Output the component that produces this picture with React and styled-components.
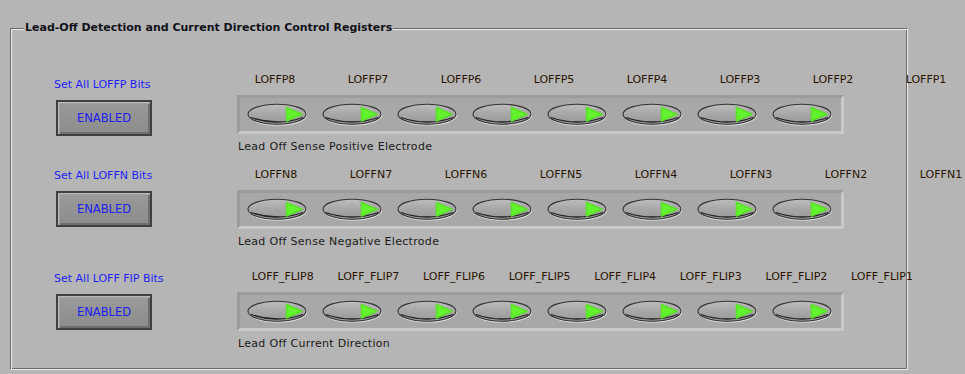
import React from "react";
import styled, { createGlobalStyle } from "styled-components";

const BG = "#b5b5b5";

const Global = createGlobalStyle`
  html, body {
    margin: 0;
    padding: 0;
    background: ${BG};
    width: 965px;
    height: 374px;
    overflow: hidden;
  }
  #root {
    font-family: "DejaVu Sans", "Liberation Sans", sans-serif;
  }
`;

const Page = styled.div`
  width: 965px;
  height: 374px;
  padding: 28px 0 0 10px;
  box-sizing: border-box;
`;

const Frame = styled.div`
  width: 898px;
  height: 342px;
  box-sizing: border-box;
  border: 1px solid;
  border-color: #6a6a6a #ececec #ececec #6a6a6a;
  box-shadow: inset 1px 1px 0 #ececec, inset -1px -1px 0 #6a6a6a;
  display: flex;
  flex-direction: column;
`;

const Title = styled.div`
  align-self: flex-start;
  margin: -8px 0 0 13px;
  padding: 0 1px;
  background: ${BG};
  font-family: "DejaVu Sans", sans-serif;
  font-weight: bold;
  font-size: 11px;
  line-height: 14px;
  color: #111118;
  white-space: nowrap;
`;

const Row = styled.div`
  display: flex;
  align-items: flex-start;
  padding-left: 43px;
  margin-top: ${(p) => p.$mt}px;
`;

const LeftCol = styled.div`
  width: 183px;
  flex: none;
  display: flex;
  flex-direction: column;
  align-items: flex-start;
  margin-top: ${(p) => p.$offset}px;
`;

const BlueLabel = styled.div`
  font-size: 11px;
  line-height: 14px;
  color: #1f1ff5;
  white-space: nowrap;
`;

const EnableButton = styled.button`
  margin: 8px 0 0 2px;
  width: 96px;
  height: 36px;
  box-sizing: border-box;
  border: 2px solid #404040;
  background: linear-gradient(#9a9a9a, #8c8c8c);
  box-shadow: inset 1px 1px 0 #b9b9b9, inset 2px 2px 0 #a2a2a2,
    inset -2px -2px 0 #6e6e6e;
  color: #2222ee;
  font-family: "DejaVu Sans", sans-serif;
  font-size: 11.5px;
  padding: 0;
  display: flex;
  align-items: center;
  justify-content: center;
`;

const RightCol = styled.div`
  display: flex;
  flex-direction: column;
  align-items: flex-start;
`;

const LabelGrid = styled.div`
  display: grid;
  grid-template-columns: repeat(8, ${(p) => p.$col}px);
  margin-left: ${(p) => p.$shift}px;
  height: 14px;
`;

const BitLabel = styled.div`
  font-size: 11px;
  line-height: 14px;
  color: #2a1400;
  text-align: center;
  white-space: nowrap;
  display: flex;
  justify-content: center;
`;

const Bar = styled.div`
  margin-top: 8px;
  width: 607px;
  height: 39px;
  box-sizing: border-box;
  border: 3px solid;
  border-color: #9b9b9b #c9c9c9 #c9c9c9 #9b9b9b;
  background: #a8a8a8;
  padding-left: 7px;
  display: flex;
  align-items: center;
  gap: 15px;
`;

const Caption = styled.div`
  margin: 6px 0 0 1px;
  font-size: 11px;
  letter-spacing: 0.3px;
  line-height: 14px;
  color: #1a1a1a;
  white-space: nowrap;
`;

const LedSvg = styled.svg`
  display: block;
  flex: none;
`;

function Led({ id }) {
  return (
    <LedSvg width="60" height="23" viewBox="0 0 60 23">
      <defs>
        <linearGradient id={`g${id}`} x1="0" y1="0" x2="0" y2="1">
          <stop offset="0" stopColor="#bdbdbd" />
          <stop offset="0.45" stopColor="#a9a9a9" />
          <stop offset="1" stopColor="#989898" />
        </linearGradient>
      </defs>
      <ellipse cx="30.6" cy="12" rx="29" ry="10" fill="none" stroke="#dedede" strokeWidth="1.2" />
      <ellipse cx="30" cy="11.2" rx="29" ry="10" fill={`url(#g${id})`} stroke="#333" strokeWidth="1.1" />
      <path d="M4 14.5 Q30 23.5 56 14.5" fill="none" stroke="#222" strokeWidth="1.3" />
      <polygon
        points="39.5,4.5 55,11.2 39.5,18"
        fill="#63f22e"
        stroke="#5ce02a"
        strokeWidth="1.6"
        strokeLinejoin="round"
      />
    </LedSvg>
  );
}

const rows = [
  {
    blue: "Set All LOFFP Bits",
    prefix: "LOFFP",
    caption: "Lead Off Sense Positive Electrode",
    mt: 38,
    offset: 5,
    col: 93,
    shift: -8.5,
  },
  {
    blue: "Set All LOFFN Bits",
    prefix: "LOFFN",
    caption: "Lead Off Sense Negative Electrode",
    mt: 14,
    offset: 1,
    col: 95,
    shift: -8.5,
  },
  {
    blue: "Set All LOFF FIP Bits",
    prefix: "LOFF_FLIP",
    caption: "Lead Off Current Direction",
    mt: 21,
    offset: 2,
    col: 85.6,
    shift: 3,
  },
];

export default function App() {
  return (
    <>
      <Global />
      <Page>
        <Frame>
          <Title>Lead-Off Detection and Current Direction Control Registers</Title>
          {rows.map((r, ri) => (
            <Row key={ri} $mt={r.mt}>
              <LeftCol $offset={r.offset}>
                <BlueLabel>{r.blue}</BlueLabel>
                <EnableButton>ENABLED</EnableButton>
              </LeftCol>
              <RightCol>
                <LabelGrid $col={r.col} $shift={r.shift}>
                  {[8, 7, 6, 5, 4, 3, 2, 1].map((n) => (
                    <BitLabel key={n}>
                      {r.prefix}
                      {n}
                    </BitLabel>
                  ))}
                </LabelGrid>
                <Bar>
                  {[0, 1, 2, 3, 4, 5, 6, 7].map((i) => (
                    <Led key={i} id={`${ri}-${i}`} />
                  ))}
                </Bar>
                <Caption>{r.caption}</Caption>
              </RightCol>
            </Row>
          ))}
        </Frame>
      </Page>
    </>
  );
}
